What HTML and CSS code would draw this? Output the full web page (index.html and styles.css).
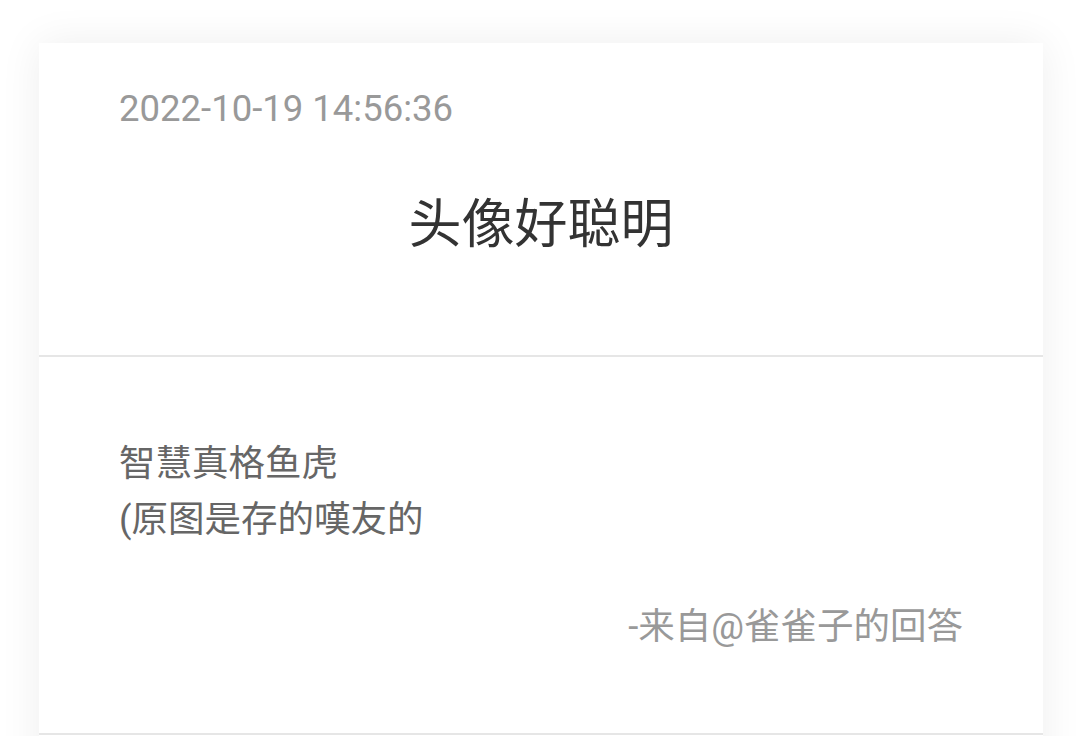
FILE: index.html
```html
<!DOCTYPE html>
<html lang="zh-CN">
<head>
<meta charset="utf-8">
<link rel="stylesheet" href="styles.css">
</head>
<body>
<div class="card">
  <div class="head">
    <div class="date">2022-10-19 14:56:36</div>
    <div class="title">头像好聪明</div>
  </div>
  <div class="body">
    <div class="text">智慧真格鱼虎<br>(原图是存的嘆友的</div>
    <div class="sign">-来自@雀雀子的回答</div>
  </div>
  <div class="foot"></div>
</div>
</body>
</html>
```
FILE: styles.css
```css
html, body {
  margin: 0;
  padding: 0;
  background: #ffffff;
  overflow: hidden;
}
body {
  font-family: Roboto, "Noto Sans CJK SC", sans-serif;
  height: 736px;
}
.card {
  margin: 43px 0 0 39px;
  width: 1004px;
  background: #fff;
  box-shadow: 0 0 40px rgba(0, 0, 0, 0.07);
}
.head {
  padding: 39px 80px 90px;
  border-bottom: 2px solid #e6e6e6;
}
.date {
  font-size: 36.5px;
  line-height: 54.75px;
  color: #999999;
}
.title {
  margin-top: 49px;
  font-size: 53px;
  line-height: 79.5px;
  color: #333333;
  text-align: center;
}
.body {
  padding: 79px 80px 78px;
  border-bottom: 2px solid #e6e6e6;
}
.text {
  font-size: 36.5px;
  line-height: 55.5px;
  color: #666666;
}
.sign {
  margin-top: 52px;
  font-size: 36.5px;
  line-height: 55.5px;
  color: #999999;
  text-align: right;
}
.foot {
  height: 60px;
}
```
